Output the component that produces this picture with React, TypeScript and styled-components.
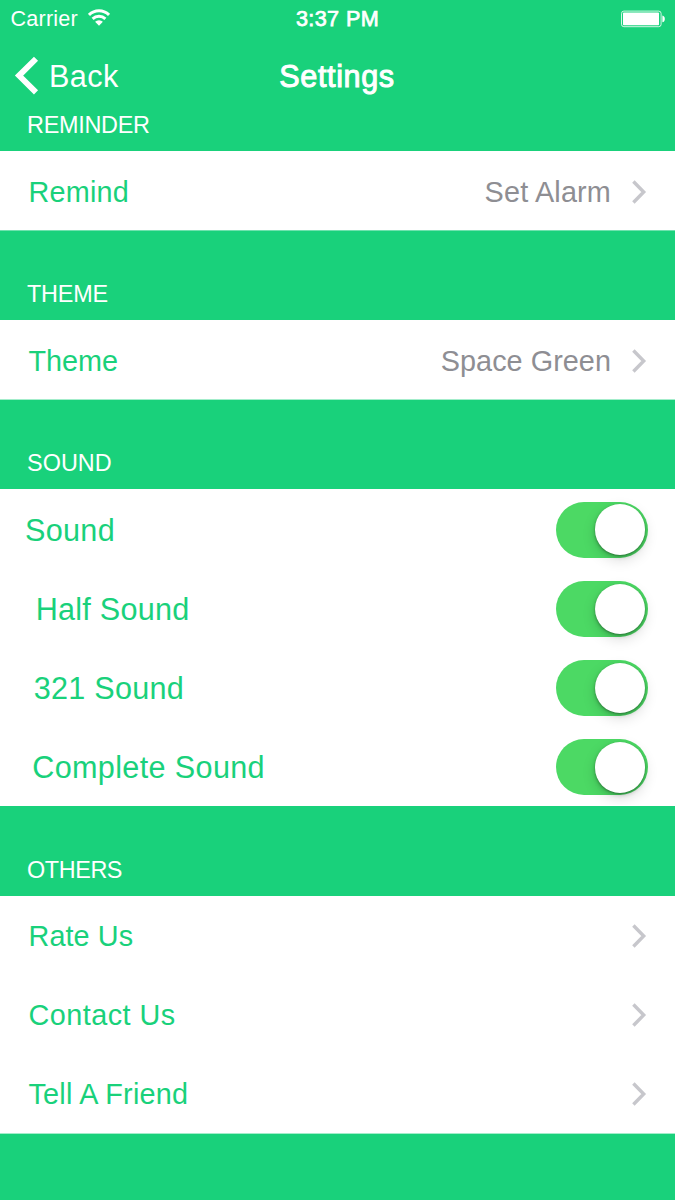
import React from "react";
import styled, { createGlobalStyle } from "styled-components";

const GREEN = "#19d17b";

const GlobalStyle = createGlobalStyle`
  html, body { margin: 0; padding: 0; background: ${GREEN}; }
  * { box-sizing: border-box; }
`;

const Screen = styled.main`
  display: flex;
  flex-direction: column;
  width: 675px;
  height: 1200px;
  overflow: hidden;
  background: ${GREEN};
  color: #fff;
  font-family: "Liberation Sans", Arial, sans-serif;
  white-space: nowrap;
`;

const StatusBar = styled.header`
  display: grid;
  grid-template-columns: 1fr auto 1fr;
  align-items: center;
  height: 36px;
  padding: 2px 10.5px 0 10.5px;
  font-size: 21.6px;
  line-height: 34px;
`;

const Carrier = styled.div`
  display: flex;
  align-items: center;
  gap: 10.5px;
  letter-spacing: 0.2px;

  svg {
    margin-top: -3px;
  }
`;

const Clock = styled.div`
  letter-spacing: 0.4px;
  -webkit-text-stroke: 0.75px #fff;
`;

const BatterySlot = styled.div`
  display: flex;
  justify-content: flex-end;
  margin-top: -1px;
`;

const NavBar = styled.nav`
  display: grid;
  grid-template-columns: 1fr auto 1fr;
  align-items: center;
  height: 79px;
  padding: 1px 15px 0 14px;
  font-size: 30.6px;
  line-height: 78px;
`;

const BackButton = styled.div`
  display: flex;
  align-items: center;
  gap: 10px;
  letter-spacing: 0.4px;
`;

const Title = styled.h1`
  margin: 0;
  font-size: 30.6px;
  font-weight: 400;
  letter-spacing: 0.6px;
  -webkit-text-stroke: 1px #fff;
`;

const SectionHeader = styled.h2<{ $height: number; $tracking: number }>`
  display: flex;
  align-items: flex-end;
  height: ${(p) => p.$height}px;
  margin: 0;
  padding: 0 0 13px 27px;
  font-size: 23.4px;
  font-weight: 400;
  line-height: 26px;
  letter-spacing: ${(p) => p.$tracking}px;
`;

const Group = styled.section<{ $height: number; $edge: string }>`
  display: grid;
  grid-auto-rows: 79.2px;
  height: ${(p) => p.$height}px;
  background: #fff;
  border-bottom: 1px solid ${(p) => p.$edge};
  overflow: hidden;
`;

const Row = styled.div<{ $indent: number; $drop?: number; $large?: boolean }>`
  display: flex;
  align-items: center;
  padding: ${(p) => p.$drop ?? 1}px 27.4px 0 ${(p) => p.$indent}px;
  color: ${GREEN};
  font-size: ${(p) => (p.$large ? 30.6 : 28.8)}px;
  line-height: 36px;
`;

const Label = styled.span<{ $tracking: number }>`
  flex: 1;
  letter-spacing: ${(p) => p.$tracking}px;
`;

const Value = styled.span<{ $tracking: number }>`
  margin-right: 19.6px;
  color: #8e8e93;
  letter-spacing: ${(p) => p.$tracking}px;
`;

const Track = styled.div`
  display: flex;
  justify-content: flex-end;
  width: 92px;
  height: 56px;
  margin-right: -0.4px;
  padding: 2.6px;
  border-radius: 28px;
  background: #4cd964;
`;

const Knob = styled.div`
  width: 50.6px;
  height: 50.6px;
  border-radius: 50%;
  background: #fff;
  box-shadow: 0 1px 2px rgba(0, 0, 0, 0.25), 0 5px 14px rgba(0, 0, 0, 0.14), 0 2px 4px rgba(0, 0, 0, 0.18);
`;

const Chevron = () => (
  <svg width="17" height="26" viewBox="0 0 17 26" fill="none">
    <path d="M2.4 2.5 12.7 13 2.4 23.5" stroke="#c7c7cc" strokeWidth="3.4" />
  </svg>
);

const WifiIcon = () => (
  <svg width="22" height="17" viewBox="0 0 22 17" fill="none" stroke="#fff" strokeWidth="2.9">
    <path d="M1 5.9a14.2 14.2 0 0 1 20 0" />
    <path d="M4.6 9.9a9.2 9.2 0 0 1 12.8 0" />
    <path d="M7.1 12.8a5.6 5.6 0 0 1 7.8 0L11 16.7Z" fill="#fff" stroke="none" />
  </svg>
);

const BatteryIcon = () => (
  <svg width="45" height="18" viewBox="0 0 45 18">
    <rect x="1.5" y="1.1" width="39.6" height="15.6" rx="2.4" fill="none" stroke="#fff" strokeOpacity="0.8" />
    <rect x="3" y="2.5" width="36" height="12.8" rx="0.8" fill="#fff" />
    <path d="M42.4 5.6c1.6.3 2.4 1.6 2.4 3.3s-.8 3-2.4 3.3Z" fill="#fff" />
  </svg>
);

const BackIcon = () => (
  <svg width="25" height="40" viewBox="0 0 25 40" fill="none">
    <path d="M22 2.8 5 19.6 22 36.4" stroke="#fff" strokeWidth="5.8" />
  </svg>
);

const Toggle = () => (
  <Track role="switch" aria-checked="true">
    <Knob />
  </Track>
);

const sounds = [
  { label: "Sound", indent: 25, tracking: 0.3 },
  { label: "Half Sound", indent: 35.8, tracking: 0.22 },
  { label: "321 Sound", indent: 33.7, tracking: 0.25 },
  { label: "Complete Sound", indent: 32.2, tracking: 0.35 },
];

const links = [
  { label: "Rate Us", tracking: 0.1 },
  { label: "Contact Us", tracking: 0.48 },
  { label: "Tell A Friend", tracking: 0.22 },
];

export default function App() {
  return (
    <>
      <GlobalStyle />
      <Screen>
        <StatusBar>
          <Carrier>
            Carrier
            <WifiIcon />
          </Carrier>
          <Clock>3:37 PM</Clock>
          <BatterySlot>
            <BatteryIcon />
          </BatterySlot>
        </StatusBar>
        <NavBar>
          <BackButton>
            <BackIcon />
            Back
          </BackButton>
          <Title>Settings</Title>
        </NavBar>

        <SectionHeader $height={36} $tracking={-0.25}>REMINDER</SectionHeader>
        <Group $height={80} $edge="#6fe2ae">
          <Row $indent={28.5} $drop={2.4}>
            <Label $tracking={0.2}>Remind</Label>
            <Value $tracking={0.18}>Set Alarm</Value>
            <Chevron />
          </Row>
        </Group>

        <SectionHeader $height={89} $tracking={-0.2}>THEME</SectionHeader>
        <Group $height={80} $edge="#a3edcb">
          <Row $indent={28.5} $drop={2.4}>
            <Label $tracking={-0.05}>Theme</Label>
            <Value $tracking={0.05}>Space Green</Value>
            <Chevron />
          </Row>
        </Group>

        <SectionHeader $height={89} $tracking={0.05}>SOUND</SectionHeader>
        <Group $height={317} $edge="#fff">
          {sounds.map((s) => (
            <Row key={s.label} $indent={s.indent} $drop={2.4} $large>
              <Label $tracking={s.tracking}>{s.label}</Label>
              <Toggle />
            </Row>
          ))}
        </Group>

        <SectionHeader $height={90} $tracking={-0.4}>OTHERS</SectionHeader>
        <Group $height={238} $edge="#a3edcb">
          {links.map((l) => (
            <Row key={l.label} $indent={28.5} $drop={1}>
              <Label $tracking={l.tracking}>{l.label}</Label>
              <Chevron />
            </Row>
          ))}
        </Group>
      </Screen>
    </>
  );
}
